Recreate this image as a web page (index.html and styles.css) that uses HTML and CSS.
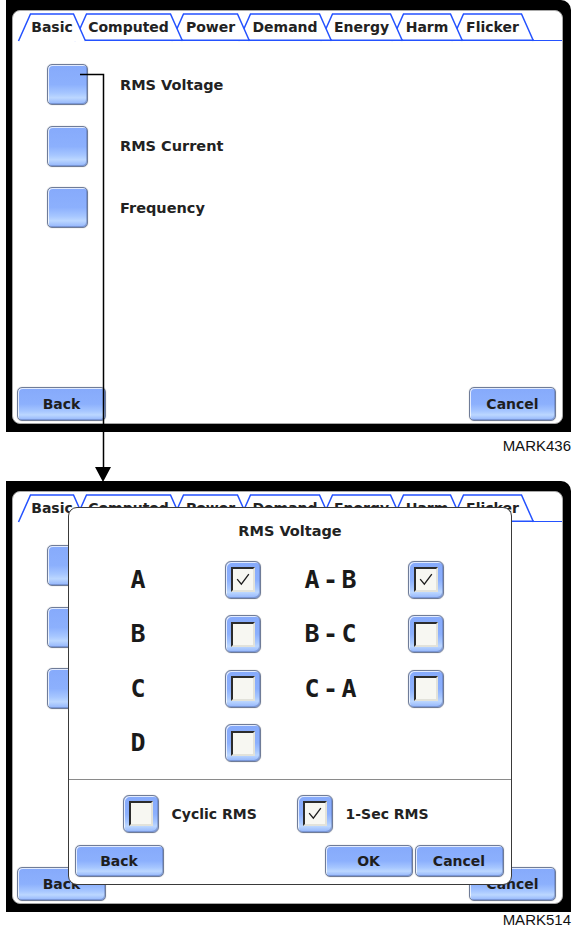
FILE: index.html
```html
<!DOCTYPE html>
<html>
<head>
<meta charset="utf-8"/>
<link rel="icon" href="data:,">
<link rel="stylesheet" href="styles.css">
<title>RMS Voltage selection</title>
</head>

<body>
<div class="Page">

  <!-- first screen: Basic tab -->
  <div class="Shot">
    <div class="Screen">
      <div class="Panel">
        <div class="TabBar">
          <div class="Tab T1 W1"><svg viewBox="0 0 68 28"><path d="M0.5 28 L12.5 1 H55.5 L67.5 28"/></svg>Basic</div>
          <div class="Tab T2 W2"><svg viewBox="0 0 109 28"><path d="M0.5 28 L12.5 1 H96.5 L108.5 28"/><path class="Base" d="M0 27.25 H109"/></svg>Computed</div>
          <div class="Tab T3 W3"><svg viewBox="0 0 79 28"><path d="M0.5 28 L12.5 1 H66.5 L78.5 28"/><path class="Base" d="M0 27.25 H79"/></svg>Power</div>
          <div class="Tab T4 W4"><svg viewBox="0 0 94 28"><path d="M0.5 28 L12.5 1 H81.5 L93.5 28"/><path class="Base" d="M0 27.25 H94"/></svg>Demand</div>
          <div class="Tab T5 W5"><svg viewBox="0 0 83 28"><path d="M0.5 28 L12.5 1 H70.5 L82.5 28"/><path class="Base" d="M0 27.25 H83"/></svg>Energy</div>
          <div class="Tab T6 W6"><svg viewBox="0 0 72 28"><path d="M0.5 28 L12.5 1 H59.5 L71.5 28"/><path class="Base" d="M0 27.25 H72"/></svg>Harm</div>
          <div class="Tab T7 W7"><svg viewBox="0 0 83 28"><path d="M0.5 28 L12.5 1 H70.5 L82.5 28"/><path class="Base" d="M0 27.25 H83"/></svg>Flicker</div>
          <div class="TabRest"></div>
        </div>
        <div class="ItemList">
          <div class="Item"><span class="Btn Square"></span><span>RMS Voltage</span></div>
          <div class="Item"><span class="Btn Square"></span><span>RMS Current</span></div>
          <div class="Item"><span class="Btn Square"></span><span>Frequency</span></div>
        </div>
        <div class="Footer">
          <span class="Btn Wide">Back</span>
          <span class="Btn Wide Narrow">Cancel</span>
        </div>
      </div>
    </div>
    <div class="Mark">MARK436</div>
  </div>

  <!-- second screen: RMS Voltage dialog on top -->
  <div class="Shot Covered">
    <div class="Screen">
      <div class="Panel">
        <div class="TabBar">
          <div class="Tab T1 W1"><svg viewBox="0 0 68 28"><path d="M0.5 28 L12.5 1 H55.5 L67.5 28"/></svg>Basic</div>
          <div class="Tab T2 W2"><svg viewBox="0 0 109 28"><path d="M0.5 28 L12.5 1 H96.5 L108.5 28"/><path class="Base" d="M0 27.25 H109"/></svg>Computed</div>
          <div class="Tab T3 W3"><svg viewBox="0 0 79 28"><path d="M0.5 28 L12.5 1 H66.5 L78.5 28"/><path class="Base" d="M0 27.25 H79"/></svg>Power</div>
          <div class="Tab T4 W4"><svg viewBox="0 0 94 28"><path d="M0.5 28 L12.5 1 H81.5 L93.5 28"/><path class="Base" d="M0 27.25 H94"/></svg>Demand</div>
          <div class="Tab T5 W5"><svg viewBox="0 0 83 28"><path d="M0.5 28 L12.5 1 H70.5 L82.5 28"/><path class="Base" d="M0 27.25 H83"/></svg>Energy</div>
          <div class="Tab T6 W6"><svg viewBox="0 0 72 28"><path d="M0.5 28 L12.5 1 H59.5 L71.5 28"/><path class="Base" d="M0 27.25 H72"/></svg>Harm</div>
          <div class="Tab T7 W7"><svg viewBox="0 0 83 28"><path d="M0.5 28 L12.5 1 H70.5 L82.5 28"/><path class="Base" d="M0 27.25 H83"/></svg>Flicker</div>
          <div class="TabRest"></div>
        </div>
        <div class="ItemList">
          <div class="Item"><span class="Btn Square"></span><span class="Hidden">RMS Voltage</span></div>
          <div class="Item"><span class="Btn Square"></span><span class="Hidden">RMS Current</span></div>
          <div class="Item"><span class="Btn Square"></span><span class="Hidden">Frequency</span></div>
        </div>
        <div class="Footer">
          <span class="Btn Wide">Back</span>
          <span class="Btn Wide Narrow">Cancel</span>
        </div>
      </div>

      <div class="Dialog">
        <div class="DlgTitle">RMS Voltage</div>
        <div class="PhaseGrid">
          <span class="Phase">A</span>
          <span class="Btn Check"><span class="Box"><svg viewBox="0 0 24 25"><path d="M5 12 L10 18 L19 6"/></svg></span></span>
          <span class="Phase">A-B</span>
          <span class="Btn Check"><span class="Box"><svg viewBox="0 0 24 25"><path d="M5 12 L10 18 L19 6"/></svg></span></span>

          <span class="Phase">B</span>
          <span class="Btn Check"><span class="Box"></span></span>
          <span class="Phase">B-C</span>
          <span class="Btn Check"><span class="Box"></span></span>

          <span class="Phase">C</span>
          <span class="Btn Check"><span class="Box"></span></span>
          <span class="Phase">C-A</span>
          <span class="Btn Check"><span class="Box"></span></span>

          <span class="Phase">D</span>
          <span class="Btn Check"><span class="Box"></span></span>
        </div>
        <div class="ModeRow">
          <div class="Mode First">
            <span class="Btn Check"><span class="Box"></span></span>
            <span>Cyclic RMS</span>
          </div>
          <div class="Mode">
            <span class="Btn Check"><span class="Box"><svg viewBox="0 0 24 25"><path d="M5 12 L10 18 L19 6"/></svg></span></span>
            <span>1-Sec RMS</span>
          </div>
        </div>
        <div class="DlgFooter">
          <span class="Btn Wide Small">Back</span>
          <span class="Grow"></span>
          <span class="Btn Wide Small Ok">OK</span>
          <span class="Btn Wide Small">Cancel</span>
        </div>
      </div>
    </div>
    <div class="Mark">MARK514</div>
  </div>

  <!-- callout from the RMS Voltage button to the second screen -->
  <svg class="Callout" width="573" height="490" viewBox="0 0 573 490">
    <path class="Lead" d="M80 74.5 H103.5 V468"/>
    <path class="Head" d="M95 467 H111 L103 482 Z"/>
  </svg>
</div>
</body>
</html>
```

FILE: styles.css
```css
html, body {
  margin: 0;
  padding: 0;
  background-color: #ffffff;
}

.Page {
  position: relative;
  width: 573px;
  height: 928px;
  overflow: hidden;
  font-family: "DejaVu Sans", Verdana, sans-serif;
  font-weight: bold;
  color: #222222;
}

.Shot {
  display: flex;
  flex-direction: column;
}

.Screen {
  position: relative;
  box-sizing: border-box;
  width: 565px;
  height: 432px;
  margin-left: 6px;
  padding: 10px 8px 8px 6px;
  background-color: #000000;
  border-radius: 0 10px 0 0;
}

.Covered .Screen {
  height: 431px;
}

.Panel {
  box-sizing: border-box;
  height: 100%;
  display: flex;
  flex-direction: column;
  background-color: #ffffff;
  border: 1px solid #a8a8a8;
  border-radius: 8px;
}

/* tab strip */
.TabBar {
  display: flex;
  height: 28px;
  padding: 2px 0 0 5px;
}

.Tab {
  position: relative;
  box-sizing: border-box;
  height: 28px;
  margin-left: -12px;
  padding-bottom: 1px;
  display: flex;
  align-items: center;
  justify-content: center;
  font-size: 14px;
  line-height: 16px;
}

.Tab svg {
  position: absolute;
  left: 0;
  top: 0;
  width: 100%;
  height: 100%;
  z-index: -1;
  overflow: visible;
}

.Tab path {
  fill: #ffffff;
  stroke: #2452ff;
  stroke-width: 1.5;
}

.Tab path.Base {
  fill: none;
}

.T1 { z-index: 7; margin-left: 0; }
.T2 { z-index: 6; }
.T3 { z-index: 5; }
.T4 { z-index: 4; }
.T5 { z-index: 3; }
.T6 { z-index: 2; }
.T7 { z-index: 1; }

.W1 { width: 68px; }
.W2 { width: 109px; }
.W3 { width: 79px; }
.W4 { width: 94px; }
.W5 { width: 83px; }
.W6 { width: 72px; }
.W7 { width: 83px; }

.TabRest {
  flex: 1;
  box-sizing: border-box;
  height: 28px;
  border-bottom: 1.5px solid #2452ff;
}

/* buttons */
.Btn {
  box-sizing: border-box;
  display: flex;
  align-items: center;
  justify-content: center;
  background: linear-gradient(to bottom, #86aafb 0%, #8cb0fd 50%, #a6c6ff 72%, #bcd7ff 84%, #93b5fb 100%);
  border: 1px solid #6f7c98;
  border-radius: 5px;
  box-shadow: inset 1px 1px 0 rgba(255, 255, 255, 0.75), inset -1px -1px 0 rgba(70, 90, 150, 0.35), 0 0 1px rgba(0, 0, 0, 0.4);
  font-size: 14px;
  color: #1e1e1e;
}

.Square {
  width: 41px;
  height: 41px;
  flex: none;
}

.Wide {
  width: 89px;
  height: 34px;
}

.Narrow {
  width: 87px;
}

.Small {
  height: 32px;
}

.Ok {
  width: 88px;
  margin-right: 2px;
}

/* item list on the Basic tab */
.ItemList {
  display: flex;
  flex-direction: column;
  gap: 20.5px;
  padding: 23px 0 0 34px;
  flex: 1;
}

.Item {
  display: flex;
  align-items: center;
  gap: 32px;
  font-size: 14.5px;
}

.Hidden {
  visibility: hidden;
}

.Footer {
  display: flex;
  justify-content: space-between;
  padding: 0 6px 2px 4px;
}

.Mark {
  height: 49px;
  box-sizing: border-box;
  padding: 6px 2px 0 0;
  text-align: right;
  font-family: "Liberation Sans", Arial, sans-serif;
  font-weight: normal;
  font-size: 15px;
  line-height: 16px;
  color: #111111;
}

.Covered .Mark {
  height: 16px;
  padding-top: 0;
}

/* RMS Voltage dialog */
.Dialog {
  position: absolute;
  left: 62px;
  top: 26px;
  z-index: 20;
  box-sizing: border-box;
  width: 444px;
  height: 378px;
  display: flex;
  flex-direction: column;
  background-color: #ffffff;
  border: 1.5px solid #3a3a3a;
  border-radius: 9px;
}

.DlgTitle {
  box-sizing: border-box;
  height: 52.5px;
  padding-top: 12.5px;
  text-align: center;
  font-size: 14.5px;
  line-height: 20px;
}

.PhaseGrid {
  display: grid;
  grid-template-columns: 94px 80px 103px 36px;
  grid-auto-rows: 38px;
  row-gap: 16.5px;
  padding: 0 0 16.5px 61.5px;
  border-bottom: 1px solid #8a8a8a;
}

.Phase {
  font-family: "DejaVu Sans Mono", monospace;
  font-weight: bold;
  font-size: 25px;
  line-height: 38px;
  letter-spacing: 3.5px;
  white-space: nowrap;
  color: #1a1a1a;
}

.Check {
  width: 36px;
  height: 38px;
  border-radius: 6px;
}

.Box {
  box-sizing: border-box;
  width: 24px;
  height: 25px;
  background-color: #f7f7f2;
  border-top: 2px solid #2c2c2c;
  border-left: 2px solid #2c2c2c;
  border-right: 2px solid #e2e2da;
  border-bottom: 2px solid #e2e2da;
}

.Box svg {
  display: block;
  width: 20px;
  height: 21px;
}

.Box path {
  fill: none;
  stroke: #1e1e1e;
  stroke-width: 1.6;
}

.ModeRow {
  display: flex;
  padding: 15px 0 0 53.5px;
}

.Mode {
  display: flex;
  align-items: center;
  gap: 13px;
  font-size: 14px;
}

.Mode.First {
  width: 174px;
}

.DlgFooter {
  display: flex;
  padding: 12px 7.5px 0 5.5px;
}

.Grow {
  flex: 1;
}

/* callout arrow */
.Callout {
  position: absolute;
  left: 0;
  top: 0;
  z-index: 30;
  pointer-events: none;
}

.Callout .Lead {
  fill: none;
  stroke: #000000;
  stroke-width: 1.5;
}

.Callout .Head {
  fill: #000000;
}
```
